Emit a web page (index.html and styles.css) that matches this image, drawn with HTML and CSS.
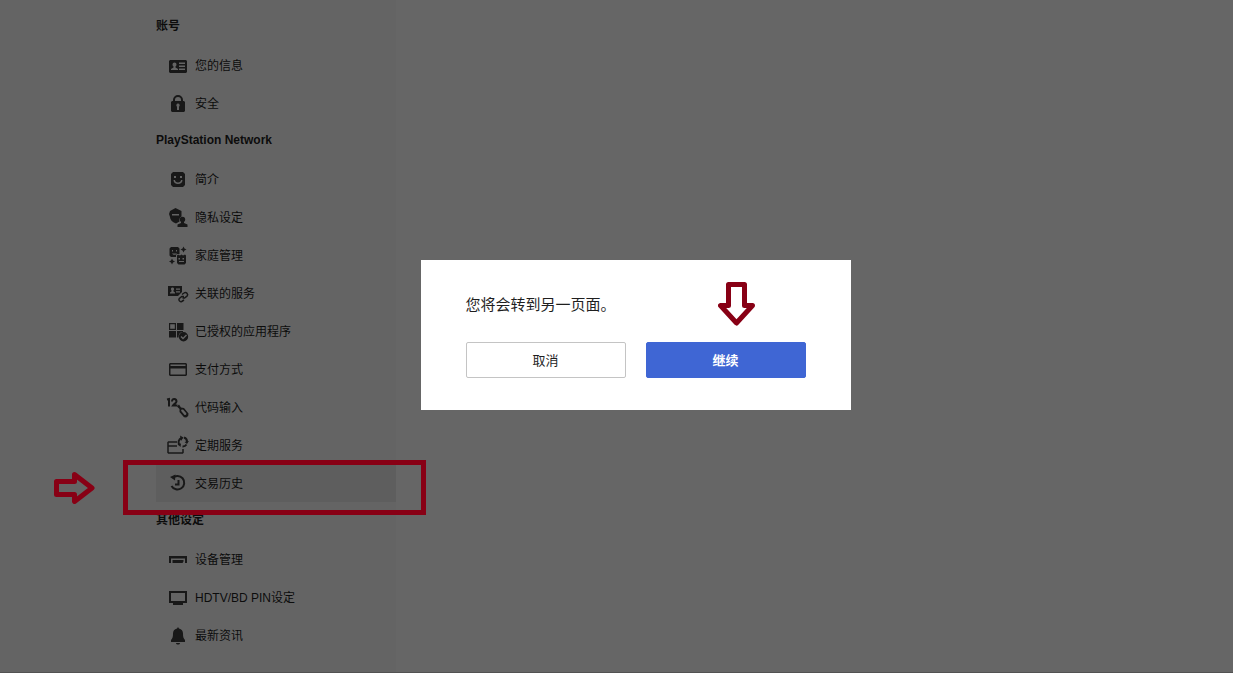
FILE: index.html
```html
<!DOCTYPE html>
<html lang="zh-CN">
<head>
    <meta charset="UTF-8">
    <meta name="viewport" content="width=device-width, initial-scale=1.0">
    <title>交易历史</title>
    <link rel="stylesheet" href="styles.css">
</head>
<body>
    <main class="page">
        <nav class="sidebar">
            <h2>账号</h2>
            <ul>
                <li><a href="#">
                    <svg class="icon" viewBox="0 0 24 24"><path fill-rule="evenodd" d="M4 7h16l1 1v11l-1 1H4l-1-1V8zM8.500 9.500a2 2 0 0 0-2 2c0 1 .5 1.500 1 2v1L5 16v1h7v-1l-2.500-1.500v-1c.5-.5 1-1 1-2a2 2 0 0 0-2-2zM13 9.500V11h6V9.500zM13 12.500V14h6v-1.500zM13 15.500V17h6v-1.500z"/></svg>
                    <span>您的信息</span></a></li>
                <li><a href="#">
                    <svg class="icon" viewBox="0 0 24 24"><path fill-rule="evenodd" d="M7 10V9a5 5 0 0 1 10 0v1h1l1 1v9l-1 1H6l-1-1v-9l1-1zM9 10h6V9a3 3 0 0 0-6 0zM12 12.500a1.800 1.800 0 0 0-1 3.200V19h2v-3.300a1.800 1.800 0 0 0-1-3.200z"/></svg>
                    <span>安全</span></a></li>
            </ul>
            <h2>PlayStation Network</h2>
            <ul>
                <li><a href="#">
                    <svg class="icon" viewBox="0 0 24 24"><path fill-rule="evenodd" d="M7 5h10l2 2v11l-2 2H7l-2-2V7zM8 9v2h2V9zM14 9v2h2V9zM7.500 13c0 2.500 2 4 4.500 4s4.500-1.500 4.500-4H15c0 1.500-1.300 2.500-3 2.500S9 14.500 9 13z"/></svg>
                    <span>简介</span></a></li>
                <li><a href="#">
                    <svg class="icon" viewBox="0 0 24 24"><path fill-rule="evenodd" d="M9.500 3l6 3v5.500c-2 1-2.500 3-2 5L10 18.500c-4-1.500-6-4-6-6.500L3 9l1-3zM6 9v1.500h7V9z"/><circle cx="16.500" cy="14.500" r="2.700"/><path d="M15 16h3v2l3.500 1.500V22h-10v-2.500L15 18z"/></svg>
                    <span>隐私设定</span></a></li>
                <li><a href="#">
                    <svg class="icon" viewBox="0 0 24 24"><path fill-rule="evenodd" d="M5 4h7l1.500 1.500V11H11l-1 1v2H5l-1.500-1.500v-7zM6 7v1.500h1V7zM10 7v1.500h1V7zM6 10.500c1 1.800 4 1.800 5 0z"/><path fill-rule="evenodd" d="M12 11.500l2 1 1.500-1 1.500 1 2-1 1 1V20l-1.500 1.500h-6L11 20v-7.500zM12.500 15v1.500H14V15zM16.500 15v1.500H18V15zM13 18v1h5v-1z"/><path d="M17.500 3.500l1 2 2 1-2 1-1 2-1-2-2-1 2-1zM6 15.500l1 2 2 1-2 1-1 2-1-2-2-1 2-1z"/></svg>
                    <span>家庭管理</span></a></li>
                <li><a href="#">
                    <svg class="icon" viewBox="0 0 24 24"><path fill-rule="evenodd" d="M2 5h14v6l-4 4H2zM6.500 6.500a1.500 1.500 0 0 0-1 2.700v1.300L4 11.500v1h5v-1l-1.500-1V9.200a1.500 1.500 0 0 0-1-2.700zM10 7.500v1.200h4V7.500zM10 10.300v1.200h4v-1.200z"/><path class="line thin" d="M16 13.500l2-1.500a2.200 2.200 0 0 1 3 3.200L18.500 17H16.500M18 15.500h-2.200l-2.500 2a2 2 0 0 0 2.400 3l2.300-1.500"/></svg>
                    <span>关联的服务</span></a></li>
                <li><a href="#">
                    <svg class="icon" viewBox="0 0 24 24"><path fill-rule="evenodd" d="M3 4h7v7H3zM4.200 5.200v4.600h4.600V5.200zM11 4h6.500v7H11zM3 12h7v6.500H3zM11 12h6v1c-3 0-4.500 2-4.500 5.500H11z"/><path fill-rule="evenodd" d="M17.500 13a4.700 4.700 0 1 0 0 9.400 4.700 4.700 0 0 0 0-9.400zM14.500 18l1-1 1.500 1.500 3-3 1 1-4 4z"/></svg>
                    <span>已授权的应用程序</span></a></li>
                <li><a href="#">
                    <svg class="icon" viewBox="0 0 24 24"><path fill-rule="evenodd" d="M4 6h16l1 1v11l-1 1H4l-1-1V7zM4.500 7.500V9h15V7.500zM4.500 11.500v6h15v-6z"/></svg>
                    <span>支付方式</span></a></li>
                <li><a href="#">
                    <svg class="icon" viewBox="0 0 24 24"><path class="line" d="M1 4.500L3 4v7.500M6 6.500c0-3.500 4.500-3 4.500 0C10.500 8 8 9 7 10.500h4.500"/><path fill-rule="evenodd" d="M11 11.500l2-2 2 3 3 .5 4.500 5.500-.3 2.500-2 1.500-2.200-.2-4.500-5.300v-3zM15.200 14.800v1.200l3.300 4h1l.8-.8v-1L17 14.500z"/></svg>
                    <span>代码输入</span></a></li>
                <li><a href="#">
                    <svg class="icon" viewBox="0 0 24 24"><path class="line thin" d="M11 9H2.500L2 9.500v10l.5.500h14l.5-.5V16M2 13h9"/><path class="line" d="M13.500 12a4.500 4.500 0 0 1 2-7M18 4.500a4.500 4.500 0 0 1 3 4.500M20.500 11.500a4.500 4.500 0 0 1-4 2"/><path d="M14 2.500l3.500 2L15 8zM23 8l-2 3-2.500-2zM11.500 11l3.500-.5-.5 3.500z"/></svg>
                    <span>定期服务</span></a></li>
                <li><a href="#" class="active" aria-current="page">
                    <svg class="icon" viewBox="0 0 24 24"><path class="line" d="M6.500 7A6.800 6.800 0 1 1 5.500 15M12.500 9V13.500H9"/><path d="M9.500 3.500L9 9.500 4 6z"/></svg>
                    <span>交易历史</span></a></li>
            </ul>
            <h2>其他设定</h2>
            <ul>
                <li><a href="#">
                    <svg class="icon" viewBox="0 0 24 24"><path d="M3 9h18v7h-2v-4.500H5V16H3zM6.500 13h11v1.500l-1 1.500h-10z"/></svg>
                    <span>设备管理</span></a></li>
                <li><a href="#">
                    <svg class="icon" viewBox="0 0 24 24"><path fill-rule="evenodd" d="M3 6h18v12h-4v2H7v-2H3zM5 8v8h14V8z"/></svg>
                    <span>HDTV/BD PIN设定</span></a></li>
                <li><a href="#">
                    <svg class="icon" viewBox="0 0 24 24"><path d="M12 4l1 1.500c2.700.7 4 2.500 4 5 0 3.500.5 5 2 6.500V19H5v-2c1.500-1.500 2-3 2-6.500 0-2.500 1.300-4.300 4-5zM10 20h4c0 1-1 1.500-2 1.500s-2-.5-2-1.500z"/></svg>
                    <span>最新资讯</span></a></li>
            </ul>
        </nav>
    </main>

    <div class="overlay">
        <div class="dialog" role="dialog" aria-labelledby="dialog-text">
            <p id="dialog-text">您将会转到另一页面。</p>
            <div class="buttons">
                <button type="button" class="cancel">取消</button>
                <button type="button" class="continue">继续</button>
            </div>
            <svg class="mark mark-down" viewBox="0 0 37 44"><path d="M10.500 2.500h16v21h8L18.500 41 2.500 23.500h8z"/></svg>
        </div>
    </div>

    <svg class="mark mark-right" viewBox="0 0 41 32"><path d="M2.500 9.500h18v-7L38 16 20.500 29.500v-7h-18z"/></svg>
    <div class="mark-box"></div>
</body>
</html>
```

FILE: styles.css
```css
* {
    box-sizing: border-box;
}

body {
    margin: 0;
    font-family: "Liberation Sans", "Noto Sans CJK SC", sans-serif;
    font-size: 12px;
    color: #1f1f1f;
    background-color: #fff;
}

.page {
    display: flex;
    min-height: 100vh;
    border-bottom: 1px solid #ccc;
}

.sidebar {
    width: 396px;
    padding: 8px 0 16px 156px;
    background-color: #fbfbfb;
}

.sidebar h2 {
    margin: 0;
    height: 38px;
    font-size: 12px;
    line-height: 36px;
}

.sidebar ul {
    list-style: none;
    margin: 0;
    padding: 0;
}

.sidebar a {
    display: flex;
    align-items: center;
    gap: 5px;
    height: 38px;
    padding-left: 10px;
    color: #1f1f1f;
    text-decoration: none;
}

.sidebar a.active {
    background-color: #ebebeb;
}

.sidebar span {
    padding-bottom: 2px;
}

.icon {
    width: 24px;
    height: 24px;
    fill: #3c3c3c;
}

.icon .line {
    fill: none;
    stroke: #3c3c3c;
    stroke-width: 2;
}

.icon .thin {
    stroke-width: 1.5;
}

.overlay {
    position: fixed;
    inset: 0;
    display: flex;
    align-items: center;
    justify-content: center;
    padding: 0 0 4px 38px;
    background-color: rgba(0, 0, 0, 0.6);
}

.dialog {
    position: relative;
    width: 430px;
    padding: 30px 45px 32px;
    background-color: #fff;
}

.dialog p {
    margin: 0 0 22px;
    font-size: 15px;
    line-height: 30px;
}

.buttons {
    display: flex;
    gap: 20px;
}

.buttons button {
    flex: 1;
    height: 36px;
    border: 1px solid #c4c4c4;
    border-radius: 2px;
    font-family: inherit;
    font-size: 13px;
    color: #1f1f1f;
    background-color: #fff;
    cursor: pointer;
}

.buttons .continue {
    border-color: #3f66d4;
    font-weight: bold;
    color: #fff;
    background-color: #3f66d4;
}

/* red marks drawn over the page */
.mark {
    position: absolute;
    fill: none;
    stroke: #880015;
    stroke-width: 5;
    stroke-linejoin: round;
}

.mark-down {
    top: 22px;
    right: 96px;
    width: 37px;
    height: 44px;
}

.mark-right {
    top: 472px;
    left: 54px;
    width: 41px;
    height: 32px;
}

.mark-box {
    position: absolute;
    top: 460px;
    left: 123px;
    width: 303px;
    height: 55px;
    border: 5px solid #880015;
}
```
